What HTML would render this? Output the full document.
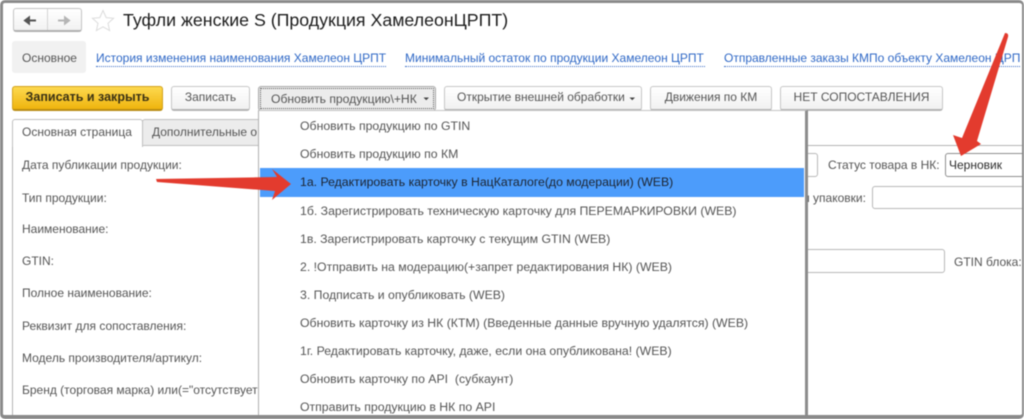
<!DOCTYPE html>
<html><head><meta charset="utf-8">
<style>
html,body{margin:0;padding:0;background:#fff}
#p{position:relative;width:1024px;height:419px;overflow:hidden;background:#fff;font-family:"Liberation Sans",sans-serif;font-size:12px;color:#555;filter:blur(.4px)}
#p div,#p span.t{position:absolute;white-space:nowrap;box-sizing:border-box}
.t{line-height:14px;height:14px}
.b{background:linear-gradient(#fff,#f1f1f1);border:1px solid #c6c6c6;border-bottom:2px solid #b4b4b4;border-radius:3px;text-align:center;line-height:21px;height:25px;top:86px;color:#555}
.l{color:#2f68c6;top:51px;height:16px;line-height:14px;border-bottom:1px dotted #3a6cc4}
.m{left:300px;height:14px;line-height:14px;color:#555;font-size:12.27px}
.f{left:22px;color:#555;height:14px;line-height:14px}
.i{background:#fff;border:1px solid #b8b8b8;border-radius:3px}
</style></head><body>
<div id="p">
<div style="left:13px;top:8px;width:69px;height:24px;background:linear-gradient(#fff,#f2f2f2);border:1px solid #c4c4c4;border-bottom:2px solid #b0b0b0;border-radius:3px"></div>
<div style="left:47px;top:9px;width:1px;height:21px;background:#d4d4d4"></div>
<svg style="position:absolute;left:0;top:0" width="130" height="40">
<path d="M25 20.500H36M25 20.500L29 17.500V23.500Z" fill="#555" stroke="#555" stroke-width="2"/>
<path d="M69 20.500H58M69 20.500L65 17.500V23.500Z" fill="#b5b5b5" stroke="#b5b5b5" stroke-width="2"/>
<path d="M103 10.500L106.200 17.600L113.600 18.300L108 23.300L109.600 30.500L103 26.800L96.400 30.500L98 23.300L92.400 18.300L99.800 17.600Z" fill="#fff" stroke="#dcdcdc" stroke-width="1"/>
</svg>
<div style="left:123px;top:10px;font-size:17.77px;line-height:20px;color:#1c1c1c">Туфли женские S (Продукция ХамелеонЦРПТ)</div>

<div style="left:12px;top:41px;width:74px;height:32px;background:#f1f1f1;border-radius:3px"></div>
<div class="t" style="left:22px;top:51px">Основное</div>
<div class="l" style="left:96px;width:290px">История изменения наименования Хамелеон ЦРПТ</div>
<div class="l" style="left:405px;width:300px">Минимальный остаток по продукции Хамелеон ЦРПТ</div>
<div class="l" style="left:724px;width:296px;overflow:hidden">Отправленные заказы КМПо объекту Хамелеон ЦРПТ</div>

<div class="b" style="left:12px;width:151px;background:linear-gradient(#fdd94f,#efb40e);border:1px solid #d3a21a;border-bottom:2px solid #b98d14;color:#3a3214;font-weight:bold;font-size:12.500px">Записать и закрыть</div>
<div class="b" style="left:171px;width:79px">Записать</div>
<div class="b" style="left:258px;width:178px;background:#ececec;border:1px solid #a8a8a8;border-bottom:1px solid #a8a8a8"></div>
<div style="left:260px;top:88px;width:174px;height:21px;border:1px dotted #555"></div>
<div class="t" style="left:271px;top:92px;font-size:12.150px">Обновить продукцию\+НК</div>
<svg style="position:absolute;left:0;top:90px" width="440" height="20">
<path d="M423.500 7.500h5.500l-2.750 2.750z" fill="#444"/>
</svg>
<div class="b" style="left:444px;width:198px;text-align:left;padding-left:12px">Открытие внешней обработки</div>
<svg style="position:absolute;left:628px;top:96px" width="10" height="6"><path d="M1.500 1.500h5.500l-2.750 2.750z" fill="#444"/></svg>
<div class="b" style="left:650px;width:122px">Движения по КМ</div>
<div class="b" style="left:780px;width:163px">НЕТ СОПОСТАВЛЕНИЯ</div>

<div style="left:12px;top:145px;width:1010px;height:1px;background:#b4b4b4"></div>
<div style="left:12px;top:145px;width:1px;height:270px;background:#b4b4b4"></div>
<div style="left:142px;top:119px;width:130px;height:27px;background:#ececec;border:1px solid #c0c0c0;border-radius:3px 3px 0 0"></div>
<div style="left:12px;top:119px;width:131px;height:28px;background:#fff;border:1px solid #c0c0c0;border-bottom:0;border-radius:3px 3px 0 0"></div>
<div class="t" style="left:22px;top:125px">Основная страница</div>
<div class="t" style="left:152px;top:125px;width:107px;overflow:hidden">Дополнительные о</div>

<div class="f" style="top:158px">Дата публикации продукции:</div>
<div class="f" style="top:191px">Тип продукции:</div>
<div class="f" style="top:222px">Наименование:</div>
<div class="f" style="top:254px">GTIN:</div>
<div class="f" style="top:286px">Полное наименование:</div>
<div class="f" style="top:319px">Реквизит для сопоставления:</div>
<div class="f" style="top:351px">Модель производителя/артикул:</div>
<div class="f" style="top:383px;width:236px;overflow:hidden">Бренд (торговая марка) или(="отсутствует</div>

<div class="i" style="left:780px;top:153px;width:38px;height:24px"></div>
<div class="t" style="left:828px;top:158px">Статус товара в НК:</div>
<div class="i" style="left:945px;top:153px;width:90px;height:24px;border-color:#8e8e8e"></div>
<div class="t" style="left:949px;top:158px;color:#2c2c2c">Черновик</div>
<div class="t" style="left:803px;top:191px">и упаковки:</div>
<div class="i" style="left:872px;top:186px;width:170px;height:23px"></div>
<div class="i" style="left:780px;top:249px;width:165px;height:24px"></div>
<div class="t" style="left:954px;top:255px">GTIN блока:</div>

<div style="left:258px;top:110px;width:550px;height:305px;background:#fff;border-left:1px solid #b0b0b0;border-top:1px solid #c4c4c4;border-right:3px solid #8c8c8c"></div>
<div style="left:260px;top:168px;width:544px;height:29px;background:#4c9cfb"></div>
<div class="m" style="top:119px">Обновить продукцию по GTIN</div>
<div class="m" style="top:147px">Обновить продукцию по КМ</div>
<div class="m" style="top:175px;color:#1c2430">1а. Редактировать карточку в НацКаталоге(до модерации) (WEB)</div>
<div class="m" style="top:204px">1б. Зарегистрировать техническую карточку для ПЕРЕМАРКИРОВКИ (WEB)</div>
<div class="m" style="top:232px">1в. Зарегистрировать карточку с текущим GTIN (WEB)</div>
<div class="m" style="top:260px">2. !Отправить на модерацию(+запрет редактирования НК) (WEB)</div>
<div class="m" style="top:288px">3. Подписать и опубликовать (WEB)</div>
<div class="m" style="top:316px">Обновить карточку из НК (КТМ) (Введенные данные вручную удалятся) (WEB)</div>
<div class="m" style="top:344px">1г. Редактировать карточку, даже, если она опубликована! (WEB)</div>
<div class="m" style="top:372px">Обновить карточку по API&nbsp; (субкаунт)</div>
<div class="m" style="top:400px">Отправить продукцию в НК по API</div>

<svg style="position:absolute;left:0;top:0" width="1024" height="419">
<path d="M156 179L277 177L272 169L291 184L272 200L275 191L157 182Z" fill="#e33b2e"/>
<path d="M1005 33Q1009 33 1008 37L977 141L981 144L961 156L953 135L962 138Z" fill="#e33b2e"/>
</svg>

<div style="left:0;top:0;width:1024px;height:419px;border:solid #8a8a8a;border-width:3px 2px 4px 3px;border-radius:5px"></div>
</div>
</body></html>
